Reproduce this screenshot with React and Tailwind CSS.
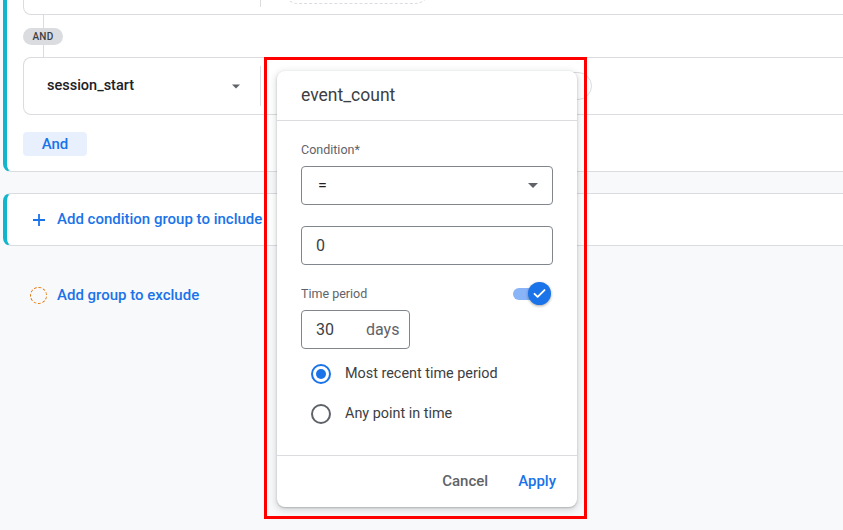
import React from 'react'

function Caret({ className }) {
  return (
    <svg className={className} width="10" height="5" viewBox="0 0 10 5" aria-hidden="true">
      <path d="M0 0h10L5 5z" fill="currentColor" />
    </svg>
  )
}

function Radio({ checked, label }) {
  return (
    <div className="flex items-center h-10 pl-[10px]">
      {checked ? (
        <span className="w-5 h-5 rounded-full border-2 border-[#1a73e8] flex items-center justify-center">
          <span className="w-[10px] h-[10px] rounded-full bg-[#1a73e8]" />
        </span>
      ) : (
        <span className="w-5 h-5 rounded-full border-2 border-[#5f6368]" />
      )}
      <span className="ml-[14px] text-[14.4px] text-[#3c4043]">{label}</span>
    </div>
  )
}

function Toggle() {
  return (
    <div className="relative w-[38px] h-6 mr-[2px]">
      <span className="absolute left-0 top-[6px] w-[34px] h-3 rounded-full bg-[#8ab4f8]" />
      <span className="absolute right-0 top-0 w-[23px] h-[23px] rounded-full bg-[#1a73e8] shadow-[0_1px_3px_rgba(0,0,0,0.35)] flex items-center justify-center">
        <svg width="15" height="15" viewBox="0 0 24 24" aria-hidden="true">
          <path d="M4 12.5l5 5L20 6.5" fill="none" stroke="#fff" strokeWidth="3" strokeLinecap="round" strokeLinejoin="round" />
        </svg>
      </span>
    </div>
  )
}

export default function App() {
  return (
    <div className="relative w-[843px] h-[530px] overflow-hidden bg-[#f8f9fa] font-['Roboto',sans-serif]">
      {/* condition group */}
      <div className="ml-[3px] bg-white border-l-4 border-l-[#12b5cb] border-b border-b-[#dadce0] rounded-bl-lg pl-4 pb-[15px]">
        <div className="flex items-start h-[15px] border-l border-b border-[#dadce0] rounded-bl-lg">
          <div className="w-[236px]" />
          <div className="w-px h-[7px] bg-[#dadce0]" />
          <div className="ml-[22px] w-[147px] h-[30px] -mt-[26px] border border-dashed border-[#dadce0] rounded-full" />
        </div>
        <div className="ml-[20px] w-px h-[13px] bg-[#dadce0]" />
        <div className="w-10 h-[17px] rounded-full bg-[#dadce0] flex items-center justify-center text-[10px] font-medium tracking-wide text-[#3c4043]">
          AND
        </div>
        <div className="ml-[20px] w-px h-[12px] bg-[#dadce0]" />
        <div className="flex items-center h-[58px] border-y border-l border-[#dadce0] rounded-l-lg pl-[23px]">
          <span className="w-[185px] text-[14.5px] font-medium text-[#202124]">session_start</span>
          <Caret className="text-[#5f6368] w-2" />
          <div className="ml-[20px] w-px h-10 bg-[#dadce0]" />
          <div className="ml-[211px] w-[120px] h-7 rounded-full border border-[#dadce0]" />
        </div>
        <button className="mt-[17px] w-16 h-6 rounded bg-[#e8f0fe] text-[#1a73e8] text-[15px] font-medium flex items-center justify-center">
          And
        </button>
      </div>

      {/* add include group */}
      <div className="mt-[21px] ml-[3px] h-[53px] bg-white border-l-4 border-l-[#12b5cb] border-y border-y-[#dadce0] rounded-l-lg flex items-center pl-[26px]">
        <svg width="12" height="12" viewBox="0 0 12 12" aria-hidden="true">
          <path d="M6 0v12M0 6h12" stroke="#1a73e8" strokeWidth="1.8" />
        </svg>
        <span className="ml-[12px] text-[15px] font-medium text-[#1a73e8]">Add condition group to include</span>
      </div>

      {/* add exclude group */}
      <div className="mt-[37px] ml-[30px] h-6 flex items-center">
        <span className="w-[17px] h-[17px] rounded-full border border-dashed border-[#e37400]" />
        <span className="ml-[10px] text-[15px] font-medium text-[#1a73e8]">Add group to exclude</span>
      </div>

      {/* dialog */}
      <div className="absolute left-[277px] top-[71px] w-[300px] h-[436px] bg-white rounded-lg shadow-[0_2px_6px_2px_rgba(60,64,67,0.15),0_1px_2px_rgba(60,64,67,0.3)] flex flex-col">
        <div className="h-[50px] flex items-center px-6 border-b border-[#dadce0] text-[17.5px] text-[#3c4043]">
          event_count
        </div>
        <div className="px-6 pt-[21px] pb-[21px] border-b border-[#dadce0]">
          <div className="text-[12.5px] leading-4 text-[#5f6368]">Condition*</div>
          <div className="mt-2 h-[39px] rounded border border-[#80868b] flex items-center pl-4 pr-[14px]">
            <span className="flex-1 text-[16px] text-[#202124]">=</span>
            <Caret className="text-[#5f6368]" />
          </div>
          <div className="mt-[21px] h-[39px] rounded border border-[#80868b] flex items-center pl-[14px] text-[16px] text-[#3c4043]">
            0
          </div>
          <div className="mt-[17px] h-6 flex items-center justify-between">
            <span className="text-[12.5px] text-[#5f6368]">Time period</span>
            <Toggle />
          </div>
          <div className="mt-1 w-[109px] h-[39px] rounded border border-[#80868b] flex items-center pl-[14px] text-[16px]">
            <span className="text-[#3c4043]">30</span>
            <span className="ml-[32px] text-[#5f6368]">days</span>
          </div>
          <div className="mt-[5px]">
            <Radio checked label="Most recent time period" />
            <Radio label="Any point in time" />
          </div>
        </div>
        <div className="flex-1 flex items-center justify-end gap-[14px] pr-[13px]">
          <button className="px-2 h-9 text-[15px] font-medium text-[#5f6368]">Cancel</button>
          <button className="px-2 h-9 text-[15px] font-medium text-[#1a73e8]">Apply</button>
        </div>
      </div>

      {/* annotation */}
      <div className="absolute left-[264px] top-[57px] w-[323px] h-[462px] border-[3px] border-[#ff0000] pointer-events-none" />
    </div>
  )
}
